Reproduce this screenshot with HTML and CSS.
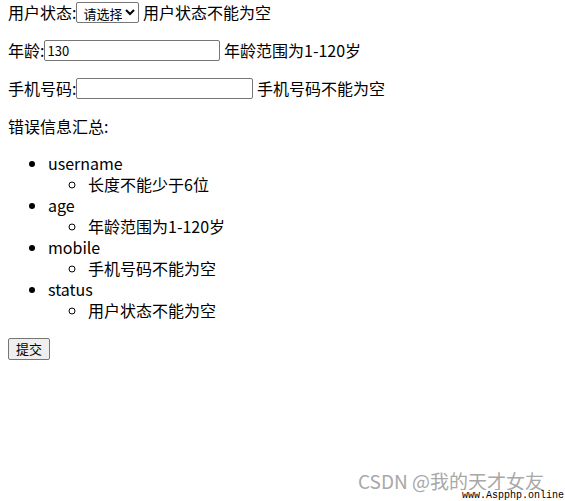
FILE: index.html
```html
<!DOCTYPE html>
<html lang="zh-CN">
<head>
    <meta charset="UTF-8">
    <title>表单验证</title>
    <link rel="stylesheet" href="styles.css">
</head>
<body>
    <div id="app">
        <form class="form">
            <p class="row first">用户状态:<select class="sel">
                    <option>请选择</option>
                    <option>启用</option>
                    <option>禁用</option>
                </select> 用户状态不能为空</p>
            <p class="row">年龄:<input class="txt age" type="text" value="130"> 年龄范围为1-120岁</p>
            <p class="row">手机号码:<input class="txt mobile" type="text"> 手机号码不能为空</p>
            <p class="row">错误信息汇总:</p>
            <ul class="errors">
                <li>username
                    <ul><li>长度不能少于6位</li></ul>
                </li>
                <li>age
                    <ul><li>年龄范围为1-120岁</li></ul>
                </li>
                <li>mobile
                    <ul><li>手机号码不能为空</li></ul>
                </li>
                <li>status
                    <ul><li>用户状态不能为空</li></ul>
                </li>
            </ul>
            <button class="btn" type="button">提交</button>
        </form>
    </div>

    <div class="mark">CSDN @我的天才女友</div>
    <div class="site">www.Aspphp.online</div>
</body>
</html>
```

FILE: styles.css
```css
body {
  margin: 0 8px;
  font-family: "Microsoft YaHei", "Noto Sans CJK SC", sans-serif;
  font-size: 16px;
  line-height: 21px;
  color: #000;
  background: #fff;
}

.row {
  margin: 16px 0;
  height: 22px;
  display: flex;
  align-items: center;
  white-space: pre;
}

.row.first {
  margin-top: 1px;
}

.sel {
  font-family: "Microsoft YaHei", "Noto Sans CJK SC", sans-serif;
  font-size: 13px;
  height: 21px;
  width: 63px;
  padding: 0 0 0 2px;
  border: 1px solid #767676;
  border-radius: 2px;
  background: #fff;
}

.txt {
  font-family: "Microsoft YaHei", "Noto Sans CJK SC", sans-serif;
  font-size: 13px;
  height: 21px;
  box-sizing: border-box;
  padding: 1px 2px;
  border: 1px solid #767676;
  border-radius: 2px;
}

.age {
  width: 176px;
}

.mobile {
  width: 177px;
}

.errors {
  margin: 16px 0;
  padding-left: 40px;
}

.errors ul {
  margin: 0;
  padding-left: 40px;
  list-style: circle;
}

.btn {
  font-family: "Microsoft YaHei", "Noto Sans CJK SC", sans-serif;
  font-size: 13px;
  height: 22px;
  width: 42px;
  padding: 0;
  border: 1px solid #767676;
  border-radius: 2px;
  background: #efefef;
}

/* watermark */
.mark {
  position: absolute;
  left: 358px;
  top: 471px;
  font-family: "Microsoft YaHei", "Noto Sans CJK SC", sans-serif;
  font-size: 19px;
  line-height: 19px;
  color: #a8a8a8;
}

.site {
  position: absolute;
  left: 462px;
  top: 490px;
  font-family: "Liberation Mono", monospace;
  font-size: 10px;
  line-height: 11px;
  color: #000;
  background: #fff;
}
```
